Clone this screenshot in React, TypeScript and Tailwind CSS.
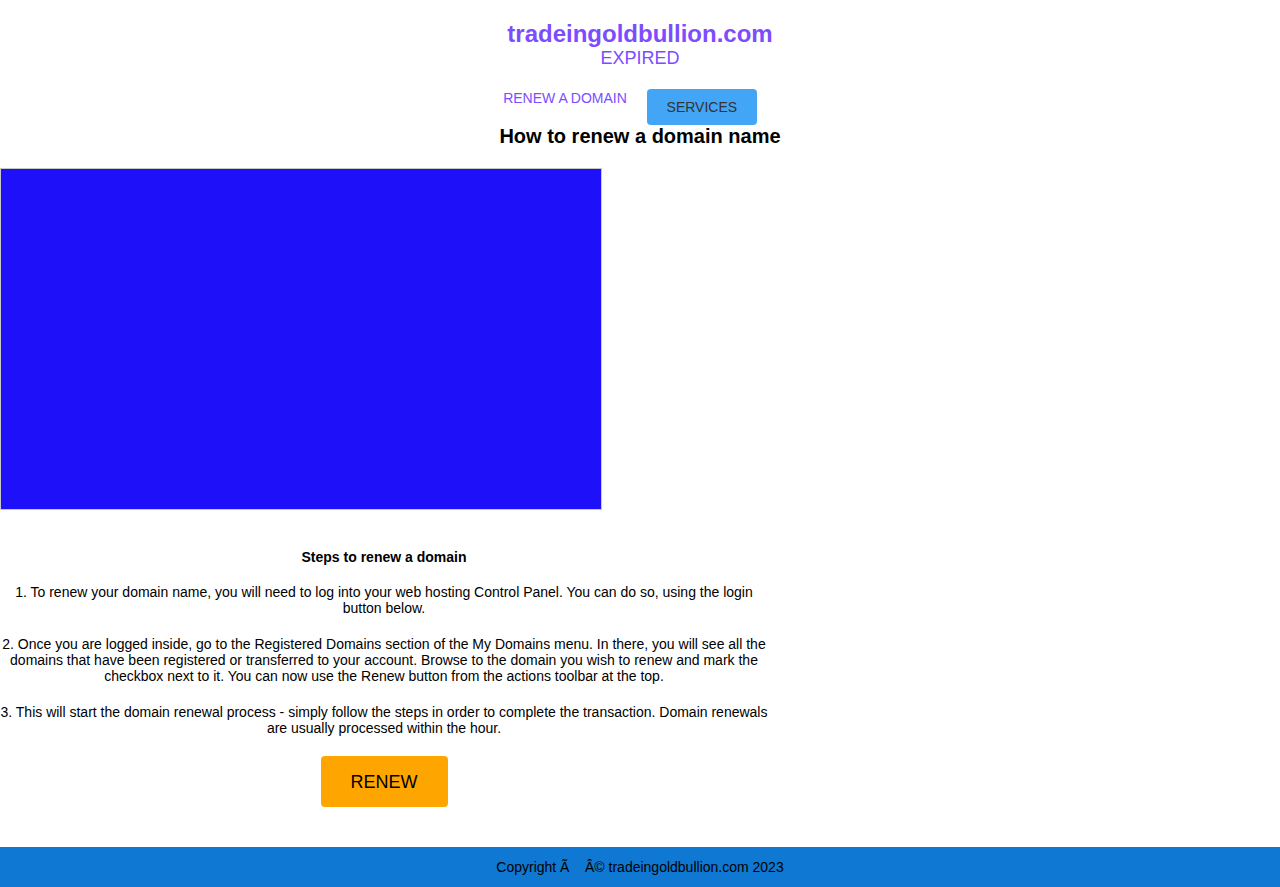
const steps = [
  "1. To renew your domain name, you will need to log into your web hosting Control Panel. You can do so, using the login button below.",
  "2. Once you are logged inside, go to the Registered Domains section of the My Domains menu. In there, you will see all the domains that have been registered or transferred to your account. Browse to the domain you wish to renew and mark the checkbox next to it. You can now use the Renew button from the actions toolbar at the top.",
  "3. This will start the domain renewal process - simply follow the steps in order to complete the transaction. Domain renewals are usually processed within the hour.",
]

export default function App() {
  return (
    <div className="min-h-[887px] flex flex-col bg-white text-black font-['Liberation_Sans',Arial,sans-serif]">
      <header className="pt-[20px] text-center text-[#7c4dff]">
        <h1 className="text-[24px] font-bold leading-[28px]">tradeingoldbullion.com</h1>
        <div className="text-[18px] leading-[20px]">EXPIRED</div>
      </header>

      <nav className="flex justify-center items-start gap-5 mt-[21px] pr-[20px]">
        <a className="text-[14px] leading-[16px] text-[#7c4dff] pt-[1px]">RENEW A DOMAIN</a>
        <a className="w-[110px] h-[36px] flex items-center justify-center rounded bg-[#42a5f5] text-[14px] text-[#333]">
          SERVICES
        </a>
      </nav>

      <h2 className="text-center text-[20px] font-bold leading-[22px]">How to renew a domain name</h2>

      <div className="mt-[21px] w-[602px] h-[342px] border border-[#c8c8c8] bg-[#1e10f9]" />

      <section className="w-[768px] text-center text-[14px] leading-[16px]">
        <h3 className="mt-[39px] text-[14px] font-bold">Steps to renew a domain</h3>
        {steps.map((s, i) => (
          <p key={s} className={i === 0 ? "mt-[19px]" : "mt-[20px]"}>
            {s}
          </p>
        ))}
        <button className="mt-[20px] w-[127px] h-[51px] rounded bg-[#ffa500] text-[18px] text-black">RENEW</button>
      </section>

      <footer className="mt-auto h-[40px] flex items-center justify-center bg-[#0e78d3] text-[14px] text-black">
        Copyright Ã&nbsp;&nbsp;&nbsp;&nbsp;Â© tradeingoldbullion.com 2023
      </footer>
    </div>
  )
}
